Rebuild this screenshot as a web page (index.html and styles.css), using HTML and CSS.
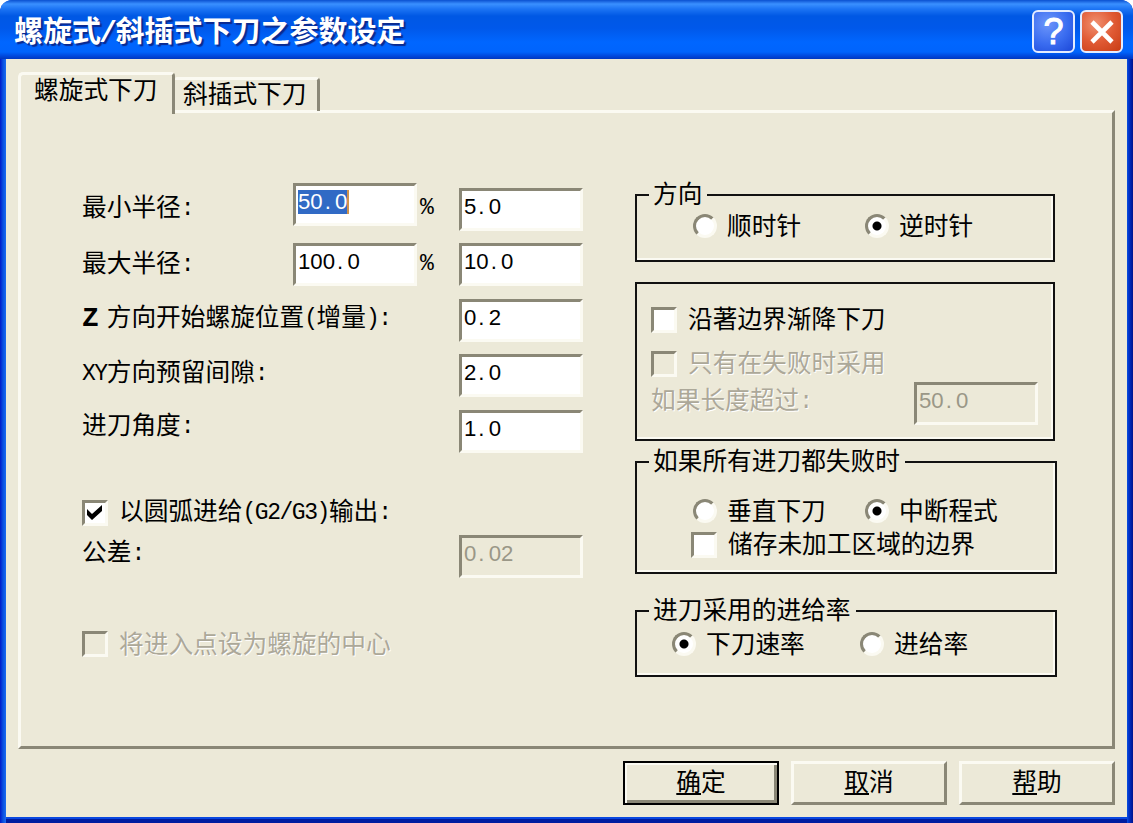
FILE: index.html
```html
<!DOCTYPE html>
<html lang="zh-CN">

<head>
    <meta charset="UTF-8">
    <title>螺旋式/斜插式下刀之参数设定</title>
    <link rel="stylesheet" href="styles.css">
</head>

<body>
    <div class="window">
        <div class="title-bar">
            <h1>螺旋式<span class="slash">/</span>斜插式下刀之参数设定</h1>
            <div class="title-btn help">?</div>
            <div class="title-btn close">
                <svg width="24" height="24" viewBox="0 0 24 24"><path d="M2 2L22 22M22 2L2 22" stroke="#fff" stroke-width="4.6"/></svg>
            </div>
        </div>

        <div class="client">
            <div class="tabs">
                <div class="tab active">螺旋式下刀</div>
                <div class="tab">斜插式下刀</div>
            </div>

            <div class="panel">
                <div class="left-side">
                    <div class="row min-row">
                        <label>最小半径<span class="half">:</span></label>
                        <div class="field"><span class="selected">50<i>.</i>0</span></div>
                        <span class="percent">%</span>
                        <div class="field">5<i>.</i>0</div>
                    </div>
                    <div class="row max-row">
                        <label>最大半径<span class="half">:</span></label>
                        <div class="field">100<i>.</i>0</div>
                        <span class="percent">%</span>
                        <div class="field">10<i>.</i>0</div>
                    </div>
                    <div class="row z-row">
                        <label><b>Z</b>方向开始螺旋位置<span class="half">(</span>增量<span class="half">):</span></label>
                        <div class="field">0<i>.</i>2</div>
                    </div>
                    <div class="row xy-row">
                        <label><span class="half">XY</span>方向预留间隙<span class="half">:</span></label>
                        <div class="field">2<i>.</i>0</div>
                    </div>
                    <div class="row angle-row">
                        <label>进刀角度<span class="half">:</span></label>
                        <div class="field">1<i>.</i>0</div>
                    </div>
                    <div class="row arc-row">
                        <span class="check"><svg width="19" height="19" viewBox="0 0 19 19"><path d="M2 6L7 11L17 2V8L7 17L2 12Z" fill="#000"/></svg></span>
                        <label>以圆弧进给<span class="half">(G2/G3)</span>输出<span class="half">:</span></label>
                    </div>
                    <div class="row tol-row">
                        <label>公差<span class="half">:</span></label>
                        <div class="field off">0<i>.</i>02</div>
                    </div>
                    <div class="row center-row">
                        <span class="check off"></span>
                        <label class="off">将进入点设为螺旋的中心</label>
                    </div>
                </div>

                <div class="right-side">
                    <fieldset class="direction">
                        <legend>方向</legend>
                        <div class="options">
                            <span class="radio"></span><label>顺时针</label>
                            <span class="radio on"></span><label>逆时针</label>
                        </div>
                    </fieldset>

                    <div class="group ramp">
                        <div class="row">
                            <span class="check"></span><label>沿著边界渐降下刀</label>
                        </div>
                        <div class="row">
                            <span class="check off"></span><label class="off">只有在失败时采用</label>
                        </div>
                        <div class="row length">
                            <label class="off">如果长度超过<span class="half">:</span></label>
                            <div class="field off">50<i>.</i>0</div>
                        </div>
                    </div>

                    <fieldset class="failed">
                        <legend>如果所有进刀都失败时</legend>
                        <div class="options">
                            <span class="radio"></span><label>垂直下刀</label>
                            <span class="radio on"></span><label>中断程式</label>
                        </div>
                        <div class="row">
                            <span class="check"></span><label>储存未加工区域的边界</label>
                        </div>
                    </fieldset>

                    <fieldset class="feed">
                        <legend>进刀采用的进给率</legend>
                        <div class="options">
                            <span class="radio on"></span><label>下刀速率</label>
                            <span class="radio"></span><label>进给率</label>
                        </div>
                    </fieldset>
                </div>
            </div>

            <div class="buttons">
                <div class="btn default"><u>确</u>定</div>
                <div class="btn"><u>取</u>消</div>
                <div class="btn"><u>帮</u>助</div>
            </div>
        </div>
    </div>
</body>

</html>
```

FILE: styles.css
```css
* {
    margin: 0;
    padding: 0;
    box-sizing: border-box;
}

body {
    background: #fff;
    color: #000;
    font-family: "Noto Sans CJK SC", sans-serif;
    font-size: 24.7px;
    line-height: 24px;
    overflow: hidden;
}

.window {
    width: 1133px;
    height: 823px;
    display: flex;
    flex-direction: column;
    border-radius: 12px 12px 0 0;
    background: linear-gradient(90deg, #0019c8 0, #0a50e0 3px, #1c6cf0 6px, #0a50e0 1127px, #0030c8 1129px, #00128c 1133px);
    overflow: hidden;
}

.title-bar {
    height: 59px;
    flex: none;
    display: flex;
    align-items: flex-start;
    gap: 5px;
    padding: 10px 10px 0 14px;
    background: linear-gradient(#0a50d0 0, #3a90ff 4px, #1c74f4 9px, #0058e4 16px, #0058ea 28px, #0066ff 42px, #0064fc 52px, #0048dc 56px, #0038c0 59px);
}

.title-bar h1 {
    flex: 1;
    color: #fff;
    font-size: 29px;
    font-weight: 700;
    line-height: 38px;
    white-space: nowrap;
    text-shadow: 2px 2px 1px #0a2a90;
}

.slash {
    font-family: "Liberation Mono", monospace;
    font-size: 30px;
    display: inline-block;
    width: 14.5px;
    text-indent: -2px;
    line-height: 30px;
}

.title-btn {
    width: 43px;
    height: 43px;
    border: 2px solid #e4ecff;
    border-radius: 6px;
    display: flex;
    align-items: center;
    justify-content: center;
    color: #fff;
}

.help {
    background: radial-gradient(circle at 35% 30%, #6c96fa, #3a6cf0 55%, #1c48d8);
    font: 36px "Liberation Sans", sans-serif;
    -webkit-text-stroke: 1px #fff;
}

.close {
    background: radial-gradient(circle at 35% 30%, #f09070, #e05a34 50%, #c83c14);
}

.client {
    flex: 1;
    margin: 0 6px 6px;
    padding: 13px 12px 0;
    background: #ece9d8;
    box-shadow: 0 2px 0 #0a48e0, 0 6px 0 #001ca0;
}

.tabs {
    display: flex;
    height: 38px;
}

.tab {
    height: 34px;
    margin-top: 5px;
    width: 145px;
    padding: 1px 0 0 8px;
    border-top: 3px solid #fbfaf2;
    border-right: 3px solid #8a8776;
    border-radius: 2px 4px 0 0;
    line-height: 22px;
    white-space: nowrap;
}

.tab.active {
    position: relative;
    width: 157px;
    height: 42px;
    margin-top: 0;
    padding: 2px 0 0 13px;
    border-left: 3px solid #fbfaf2;
    border-radius: 5px 4px 0 0;
    background: #ece9d8;
}

.panel {
    display: flex;
    width: 1097px;
    height: 639px;
    padding: 70px 0 0 61px;
    border: 3px solid #8a8776;
    border-top-color: #fbfaf2;
    border-left-color: #fbfaf2;
}

.left-side {
    width: 553px;
}

.row {
    display: flex;
    align-items: flex-start;
    white-space: nowrap;
}

.left-side .field:last-child {
    margin-left: auto;
    margin-right: 52px;
}

.half {
    font-family: "Liberation Mono", monospace;
    font-size: 23px;
    letter-spacing: -1.45px;
    line-height: 20px;
    vertical-align: 1px;
}

.row b {
    display: inline-block;
    width: 24.7px;
    font-family: "Liberation Mono", monospace;
    font-size: 28px;
    line-height: 20px;
}

.percent {
    width: 20px;
    padding-left: 3px;
    font-family: "Liberation Mono", monospace;
    font-size: 23px;
}

.field {
    width: 124px;
    height: 43px;
    padding: 4px 0 0 2px;
    border: 3px solid #8a8776;
    border-right-color: #fbfaf2;
    border-bottom-color: #fbfaf2;
    background: #fff;
    font: 22.2px/24px "Liberation Sans", sans-serif;
}

.field i {
    display: inline-block;
    width: 12.4px;
    padding-left: 2px;
    font-style: normal;
}

.field.off {
    background: #ece9d8;
    color: #9a9787;
}

.selected {
    display: inline-block;
    background: #316ac5;
    color: #fff;
    border-right: 2px solid #d0924a;
}

label.off {
    color: #aca899;
    text-shadow: 1px 1px 0 #fff;
}

.min-row { height: 60px; }
.min-row label { width: 211px; margin-top: 10px; }
.min-row .percent { margin-top: 13px; }
.min-row .field:last-child { margin-top: 5px; }
.max-row { height: 56px; }
.max-row label { width: 211px; margin-top: 6px; }
.max-row .percent { margin-top: 9px; }
.z-row { height: 55px; }
.z-row label { margin-top: 4px; }
.xy-row { height: 56px; }
.xy-row label { margin-top: 4px; }
.angle-row { height: 90px; }
.angle-row label { margin-top: 1px; }
.arc-row { height: 35px; }
.arc-row label { margin-left: 11px; margin-top: -3px; }
.tol-row { height: 96px; }
.tol-row label { margin-top: 3px; }
.center-row label { margin-left: 11px; margin-top: -1px; }

.check {
    flex: none;
    width: 26px;
    height: 26px;
    border: 3px solid #8a8776;
    border-right-color: #fbfaf2;
    border-bottom-color: #fbfaf2;
    background: #fff;
    line-height: 0;
}

.check.off {
    background: #ece9d8;
}

.radio {
    flex: none;
    width: 24px;
    height: 24px;
    border: 3px solid #8a8776;
    border-right-color: #fbfaf2;
    border-bottom-color: #fbfaf2;
    border-radius: 50%;
    background: #fff;
}

.radio.on {
    background: radial-gradient(circle, #000 4px, #fff 5px);
}

fieldset,
.group {
    border: 2px solid #111;
    box-shadow: inset -2px -2px 0 #fbfaf2;
}

legend {
    height: 24px;
    margin-left: 12px;
    padding: 0 5px 0 4px;
    line-height: 19px;
    background: #ece9d8;
}

.options {
    display: flex;
    align-items: center;
    height: 24px;
    white-space: nowrap;
}

.options label {
    height: 24px;
    margin-left: 10px;
    width: 138px;
    line-height: 21px;
}

.direction {
    width: 420px;
    height: 79px;
    margin-bottom: 20px;
}

.direction .options {
    margin: 7px 0 0 56px;
}

.ramp {
    width: 420px;
    height: 159px;
    margin-bottom: 9px;
    padding: 23px 0 0 14px;
}

.ramp .row {
    height: 44px;
}

.ramp .row label {
    margin-left: 11px;
    margin-top: -2px;
}

.ramp .length {
    height: 43px;
    margin-top: -13px;
}

.ramp .length label {
    margin: 4px 0 0;
    width: 263px;
}

.failed {
    width: 422px;
    height: 124px;
    margin-bottom: 25px;
}

.failed .options {
    margin: 25px 0 0 56px;
}

.failed .row {
    margin: 9px 0 0 54px;
}

.failed .row label {
    margin-left: 11px;
    margin-top: -2px;
}

.feed {
    width: 422px;
    height: 78px;
}

.feed .options {
    margin: 9px 0 0 35px;
}

.feed .options label {
    width: 154px;
}

.buttons {
    display: flex;
    justify-content: flex-end;
    gap: 12px;
    width: 1097px;
    margin-top: 12px;
}

.btn {
    width: 156px;
    height: 44px;
    padding-top: 4px;
    border: 3px solid #fbfaf2;
    border-right-color: #8a8776;
    border-bottom-color: #8a8776;
    text-align: center;
}

.btn u {
    text-underline-offset: 2px;
    text-decoration-thickness: 2px;
}

.btn.default {
    padding-top: 5px;
    border: 2px solid #000;
    box-shadow: inset 2px 2px 0 #fbfaf2, inset -3px -3px 0 #8a8776;
}
```
